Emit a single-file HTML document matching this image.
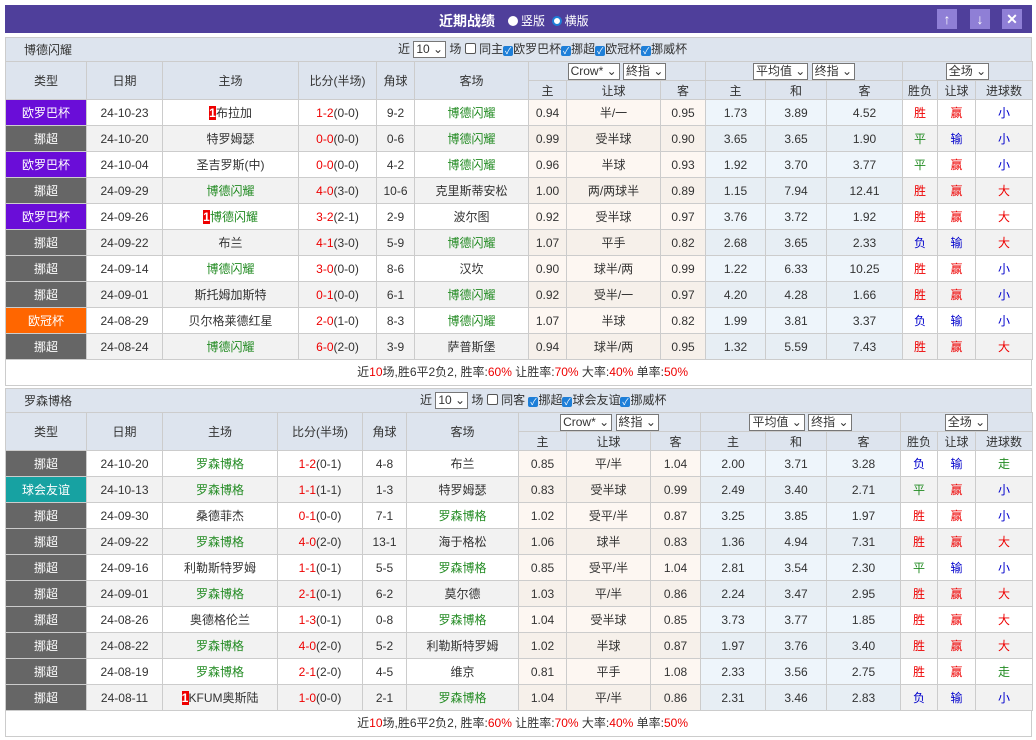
<!DOCTYPE html><html><head><meta charset="utf-8"><style>
body{margin:0;background:#fff;font-family:"Liberation Sans","Noto Sans CJK SC",sans-serif;font-size:12px;color:#333}
.wrap{position:absolute;left:5px;top:5px;width:1027px}
.title{height:28px;background:#4f3f9b;color:#fff;position:relative}
.title .t{position:absolute;left:434px;top:6px;font-size:14px;font-weight:bold}
.title .r{position:absolute;left:503px;top:7px;font-size:12px}
.rad{display:inline-block;width:10px;height:10px;border-radius:50%;background:#fff;vertical-align:-1px;margin-right:3px;box-sizing:border-box}
.rad.o{border:2px solid #1e7fd8;background:#fff}
.btn{position:absolute;top:4px;width:20px;height:20px;background:#8f7fd6;color:#fff;text-align:center;font-size:14px;line-height:20px;font-weight:bold}
.sec{height:23px;background:#dde4ee;position:relative;margin-top:4px;border:1px solid #ccc;border-bottom:none}
.sec .n{position:absolute;left:18px;top:3px}
.sec .f{position:absolute;top:2px}
.sel{display:inline-block;border:1px solid #777;background:#fff;padding:0 2px;height:15px;line-height:15px;font-size:12px;vertical-align:middle}
.cb{display:inline-block;width:10px;height:10px;background:#1e7fd8;border-radius:2px;vertical-align:-1px;color:#fff;font-size:9px;line-height:10px;text-align:center}
.cbe{display:inline-block;width:9px;height:9px;border:1px solid #555;border-radius:2px;background:#fff;vertical-align:-1px}
table{border-collapse:collapse;table-layout:fixed;width:1027px}
td{border:1px solid #ccc;text-align:center;height:25px;padding:0;white-space:nowrap;overflow:hidden}
thead td{background:#dde4ee;height:18px;color:#333}
.ty{color:#fff}
.p{background:#6a0dd8}.g{background:#666}.o{background:#ff6600}.tl{background:#17a2a2}
.gr{color:#228b22}.rd{color:#e00}.bl{color:#00c}.gn{color:#228b22}
.a{background:#fdf7f2}.b{background:#eef5fb}
tr.e td{background:#f2f2f2}tr.e td.ty.g{background:#666}tr.e td.ty.tl{background:#17a2a2}tr.e td.a{background:#f6f0ea}tr.e td.b{background:#e7eef4}
.sum{height:25px;border:1px solid #ccc;border-top:none;text-align:right;padding-right:343px;line-height:25px}
.rk{display:inline-block;background:#e00;color:#fff;font-weight:bold;width:7px;line-height:14px}
</style></head><body><div class="wrap">
<div class="title"><span class="t">近期战绩</span><span class="r"><span class="rad"></span>竖版 &nbsp;<span class="rad o"></span>横版</span>
<span class="btn" style="left:932px">↑</span><span class="btn" style="left:965px">↓</span><span class="btn" style="left:997px">✕</span></div>

<div class="sec"><span class="n">博德闪耀</span><span class="f" style="left:392px">近 <span class="sel">10 ⌄</span> 场 <span class="cbe"></span> 同主<span class="cb">✓</span>欧罗巴杯<span class="cb">✓</span>挪超<span class="cb">✓</span>欧冠杯<span class="cb">✓</span>挪威杯</span></div>
<table><colgroup><col width="81"><col width="76"><col width="136"><col width="78"><col width="38"><col width="114"><col width="38"><col width="94"><col width="45"><col width="60"><col width="61"><col width="76"><col width="35"><col width="38"><col width="57"></colgroup>
<thead><tr><td rowspan="2">类型</td><td rowspan="2">日期</td><td rowspan="2">主场</td><td rowspan="2">比分(半场)</td><td rowspan="2">角球</td><td rowspan="2">客场</td><td colspan="3"><span class="sel">Crow* ⌄</span> <span class="sel">終指 ⌄</span></td><td colspan="3"><span class="sel">平均值 ⌄</span> <span class="sel">终指 ⌄</span></td><td colspan="3"><span class="sel">全场 ⌄</span></td></tr>
<tr><td>主</td><td>让球</td><td>客</td><td>主</td><td>和</td><td>客</td><td>胜负</td><td>让球</td><td>进球数</td></tr></thead>
<tbody>
<tr><td class="ty p">欧罗巴杯</td><td>24-10-23</td><td><span class="rk">1</span>布拉加</td><td><span class="rd">1-2</span>(0-0)</td><td>9-2</td><td class="gr">博德闪耀</td><td class="a">0.94</td><td class="a">半/一</td><td class="a">0.95</td><td class="b">1.73</td><td class="b">3.89</td><td class="b">4.52</td><td class="rd">胜</td><td class="rd">赢</td><td class="bl">小</td></tr>
<tr class="e"><td class="ty g">挪超</td><td>24-10-20</td><td>特罗姆瑟</td><td><span class="rd">0-0</span>(0-0)</td><td>0-6</td><td class="gr">博德闪耀</td><td class="a">0.99</td><td class="a">受半球</td><td class="a">0.90</td><td class="b">3.65</td><td class="b">3.65</td><td class="b">1.90</td><td class="gn">平</td><td class="bl">输</td><td class="bl">小</td></tr>
<tr><td class="ty p">欧罗巴杯</td><td>24-10-04</td><td>圣吉罗斯(中)</td><td><span class="rd">0-0</span>(0-0)</td><td>4-2</td><td class="gr">博德闪耀</td><td class="a">0.96</td><td class="a">半球</td><td class="a">0.93</td><td class="b">1.92</td><td class="b">3.70</td><td class="b">3.77</td><td class="gn">平</td><td class="rd">赢</td><td class="bl">小</td></tr>
<tr class="e"><td class="ty g">挪超</td><td>24-09-29</td><td class="gr">博德闪耀</td><td><span class="rd">4-0</span>(3-0)</td><td>10-6</td><td>克里斯蒂安松</td><td class="a">1.00</td><td class="a">两/两球半</td><td class="a">0.89</td><td class="b">1.15</td><td class="b">7.94</td><td class="b">12.41</td><td class="rd">胜</td><td class="rd">赢</td><td class="rd">大</td></tr>
<tr><td class="ty p">欧罗巴杯</td><td>24-09-26</td><td><span class="rk">1</span><span class="gr">博德闪耀</span></td><td><span class="rd">3-2</span>(2-1)</td><td>2-9</td><td>波尔图</td><td class="a">0.92</td><td class="a">受半球</td><td class="a">0.97</td><td class="b">3.76</td><td class="b">3.72</td><td class="b">1.92</td><td class="rd">胜</td><td class="rd">赢</td><td class="rd">大</td></tr>
<tr class="e"><td class="ty g">挪超</td><td>24-09-22</td><td>布兰</td><td><span class="rd">4-1</span>(3-0)</td><td>5-9</td><td class="gr">博德闪耀</td><td class="a">1.07</td><td class="a">平手</td><td class="a">0.82</td><td class="b">2.68</td><td class="b">3.65</td><td class="b">2.33</td><td class="bl">负</td><td class="bl">输</td><td class="rd">大</td></tr>
<tr><td class="ty g">挪超</td><td>24-09-14</td><td class="gr">博德闪耀</td><td><span class="rd">3-0</span>(0-0)</td><td>8-6</td><td>汉坎</td><td class="a">0.90</td><td class="a">球半/两</td><td class="a">0.99</td><td class="b">1.22</td><td class="b">6.33</td><td class="b">10.25</td><td class="rd">胜</td><td class="rd">赢</td><td class="bl">小</td></tr>
<tr class="e"><td class="ty g">挪超</td><td>24-09-01</td><td>斯托姆加斯特</td><td><span class="rd">0-1</span>(0-0)</td><td>6-1</td><td class="gr">博德闪耀</td><td class="a">0.92</td><td class="a">受半/一</td><td class="a">0.97</td><td class="b">4.20</td><td class="b">4.28</td><td class="b">1.66</td><td class="rd">胜</td><td class="rd">赢</td><td class="bl">小</td></tr>
<tr><td class="ty o">欧冠杯</td><td>24-08-29</td><td>贝尔格莱德红星</td><td><span class="rd">2-0</span>(1-0)</td><td>8-3</td><td class="gr">博德闪耀</td><td class="a">1.07</td><td class="a">半球</td><td class="a">0.82</td><td class="b">1.99</td><td class="b">3.81</td><td class="b">3.37</td><td class="bl">负</td><td class="bl">输</td><td class="bl">小</td></tr>
<tr class="e"><td class="ty g">挪超</td><td>24-08-24</td><td class="gr">博德闪耀</td><td><span class="rd">6-0</span>(2-0)</td><td>3-9</td><td>萨普斯堡</td><td class="a">0.94</td><td class="a">球半/两</td><td class="a">0.95</td><td class="b">1.32</td><td class="b">5.59</td><td class="b">7.43</td><td class="rd">胜</td><td class="rd">赢</td><td class="rd">大</td></tr>
</tbody></table>
<div class="sum">近<span class="rd">10</span>场,胜6平2负2, 胜率:<span class="rd">60%</span> 让胜率:<span class="rd">70%</span> 大率:<span class="rd">40%</span> 单率:<span class="rd">50%</span></div>

<div class="sec" style="margin-top:2px"><span class="n" style="left:18px">罗森博格</span><span class="f" style="left:414px">近 <span class="sel">10 ⌄</span> 场 <span class="cbe"></span> 同客 <span class="cb">✓</span>挪超<span class="cb">✓</span>球会友谊<span class="cb">✓</span>挪威杯</span></div>
<table><colgroup><col width="81"><col width="76"><col width="115"><col width="85"><col width="44"><col width="112"><col width="48"><col width="84"><col width="50"><col width="65"><col width="61"><col width="74"><col width="37"><col width="38"><col width="57"></colgroup>
<thead><tr><td rowspan="2">类型</td><td rowspan="2">日期</td><td rowspan="2">主场</td><td rowspan="2">比分(半场)</td><td rowspan="2">角球</td><td rowspan="2">客场</td><td colspan="3"><span class="sel">Crow* ⌄</span> <span class="sel">終指 ⌄</span></td><td colspan="3"><span class="sel">平均值 ⌄</span> <span class="sel">终指 ⌄</span></td><td colspan="3"><span class="sel">全场 ⌄</span></td></tr>
<tr><td>主</td><td>让球</td><td>客</td><td>主</td><td>和</td><td>客</td><td>胜负</td><td>让球</td><td>进球数</td></tr></thead>
<tbody>
<tr><td class="ty g">挪超</td><td>24-10-20</td><td class="gr">罗森博格</td><td><span class="rd">1-2</span>(0-1)</td><td>4-8</td><td>布兰</td><td class="a">0.85</td><td class="a">平/半</td><td class="a">1.04</td><td class="b">2.00</td><td class="b">3.71</td><td class="b">3.28</td><td class="bl">负</td><td class="bl">输</td><td class="gn">走</td></tr>
<tr class="e"><td class="ty tl">球会友谊</td><td>24-10-13</td><td class="gr">罗森博格</td><td><span class="rd">1-1</span>(1-1)</td><td>1-3</td><td>特罗姆瑟</td><td class="a">0.83</td><td class="a">受半球</td><td class="a">0.99</td><td class="b">2.49</td><td class="b">3.40</td><td class="b">2.71</td><td class="gn">平</td><td class="rd">赢</td><td class="bl">小</td></tr>
<tr><td class="ty g">挪超</td><td>24-09-30</td><td>桑德菲杰</td><td><span class="rd">0-1</span>(0-0)</td><td>7-1</td><td class="gr">罗森博格</td><td class="a">1.02</td><td class="a">受平/半</td><td class="a">0.87</td><td class="b">3.25</td><td class="b">3.85</td><td class="b">1.97</td><td class="rd">胜</td><td class="rd">赢</td><td class="bl">小</td></tr>
<tr class="e"><td class="ty g">挪超</td><td>24-09-22</td><td class="gr">罗森博格</td><td><span class="rd">4-0</span>(2-0)</td><td>13-1</td><td>海于格松</td><td class="a">1.06</td><td class="a">球半</td><td class="a">0.83</td><td class="b">1.36</td><td class="b">4.94</td><td class="b">7.31</td><td class="rd">胜</td><td class="rd">赢</td><td class="rd">大</td></tr>
<tr><td class="ty g">挪超</td><td>24-09-16</td><td>利勒斯特罗姆</td><td><span class="rd">1-1</span>(0-1)</td><td>5-5</td><td class="gr">罗森博格</td><td class="a">0.85</td><td class="a">受平/半</td><td class="a">1.04</td><td class="b">2.81</td><td class="b">3.54</td><td class="b">2.30</td><td class="gn">平</td><td class="bl">输</td><td class="bl">小</td></tr>
<tr class="e"><td class="ty g">挪超</td><td>24-09-01</td><td class="gr">罗森博格</td><td><span class="rd">2-1</span>(0-1)</td><td>6-2</td><td>莫尔德</td><td class="a">1.03</td><td class="a">平/半</td><td class="a">0.86</td><td class="b">2.24</td><td class="b">3.47</td><td class="b">2.95</td><td class="rd">胜</td><td class="rd">赢</td><td class="rd">大</td></tr>
<tr><td class="ty g">挪超</td><td>24-08-26</td><td>奥德格伦兰</td><td><span class="rd">1-3</span>(0-1)</td><td>0-8</td><td class="gr">罗森博格</td><td class="a">1.04</td><td class="a">受半球</td><td class="a">0.85</td><td class="b">3.73</td><td class="b">3.77</td><td class="b">1.85</td><td class="rd">胜</td><td class="rd">赢</td><td class="rd">大</td></tr>
<tr class="e"><td class="ty g">挪超</td><td>24-08-22</td><td class="gr">罗森博格</td><td><span class="rd">4-0</span>(2-0)</td><td>5-2</td><td>利勒斯特罗姆</td><td class="a">1.02</td><td class="a">半球</td><td class="a">0.87</td><td class="b">1.97</td><td class="b">3.76</td><td class="b">3.40</td><td class="rd">胜</td><td class="rd">赢</td><td class="rd">大</td></tr>
<tr><td class="ty g">挪超</td><td>24-08-19</td><td class="gr">罗森博格</td><td><span class="rd">2-1</span>(2-0)</td><td>4-5</td><td>维京</td><td class="a">0.81</td><td class="a">平手</td><td class="a">1.08</td><td class="b">2.33</td><td class="b">3.56</td><td class="b">2.75</td><td class="rd">胜</td><td class="rd">赢</td><td class="gn">走</td></tr>
<tr class="e"><td class="ty g">挪超</td><td>24-08-11</td><td><span class="rk">1</span>KFUM奥斯陆</td><td><span class="rd">1-0</span>(0-0)</td><td>2-1</td><td class="gr">罗森博格</td><td class="a">1.04</td><td class="a">平/半</td><td class="a">0.86</td><td class="b">2.31</td><td class="b">3.46</td><td class="b">2.83</td><td class="bl">负</td><td class="bl">输</td><td class="bl">小</td></tr>
</tbody></table>
<div class="sum">近<span class="rd">10</span>场,胜6平2负2, 胜率:<span class="rd">60%</span> 让胜率:<span class="rd">70%</span> 大率:<span class="rd">40%</span> 单率:<span class="rd">50%</span></div>
</div></body></html>
